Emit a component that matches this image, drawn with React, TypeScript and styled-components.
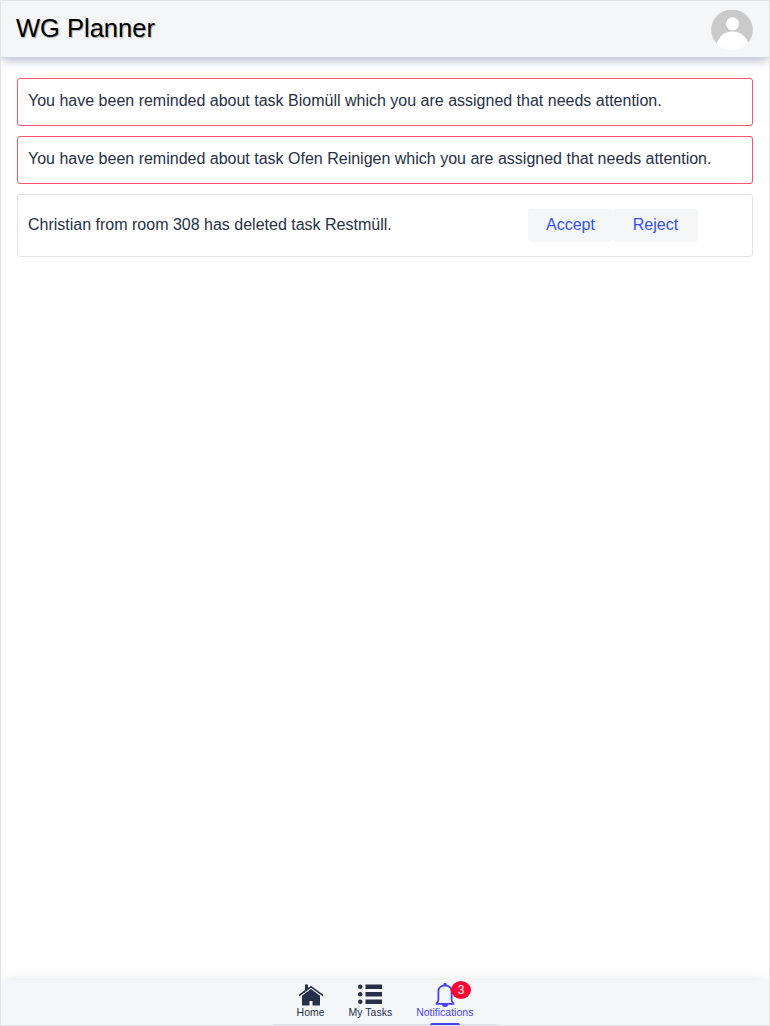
import React from "react";
import styled, { createGlobalStyle } from "styled-components";

const GlobalStyle = createGlobalStyle`
  * { box-sizing: border-box; }
  body {
    margin: 0;
    background: #fff;
    color: #263048;
    font-family: "Liberation Sans", Arial, sans-serif;
  }
`;

const Shell = styled.div`
  display: flex;
  flex-direction: column;
  height: 1026px;
  border: 1px solid #e2e3e5;
  overflow: hidden;
`;

const Header = styled.header`
  display: flex;
  align-items: center;
  justify-content: space-between;
  flex: none;
  height: 57px;
  padding: 0 16px 0 15px;
  background: #f4f6f8;
  border-bottom: 1px solid #d0d4e0;
  box-shadow: 0 3px 10px -1px rgba(60, 70, 120, 0.4);
`;

const Title = styled.h1`
  margin: 0;
  padding-bottom: 2px;
  color: #000;
  font-size: 25.5px;
  line-height: 32px;
  font-weight: 400;
  text-shadow: 1px 1px 1px rgba(0, 0, 0, 0.3);
`;

const Avatar = styled.svg`
  display: block;
  width: 42px;
  height: 40px;
  margin-top: 2px;
`;

const List = styled.main`
  display: flex;
  flex: 1;
  flex-direction: column;
  gap: 10px;
  padding: 20px 16px;
`;

const Card = styled.article<{ $urgent?: boolean }>`
  display: flex;
  align-items: center;
  justify-content: space-between;
  height: ${(p) => (p.$urgent ? 48 : 63)}px;
  padding: 0 54px 0 10px;
  border: 1px solid ${(p) => (p.$urgent ? "#f9556a" : "#e2e3e5")};
  border-radius: 3px;
  font-size: 16px;
  line-height: 26px;
`;

const Message = styled.span<{ $raised?: boolean }>`
  padding-bottom: ${(p) => (p.$raised ? 2 : 1)}px;
  white-space: nowrap;
`;

const Actions = styled.div`
  display: flex;
`;

const Button = styled.button`
  width: 85px;
  height: 33px;
  padding: 0 0 1px;
  border: 0;
  border-radius: 4px;
  background: #f3f5f7;
  color: #3450f5;
  font: 16px/32px "Liberation Sans", Arial, sans-serif;
`;

const Footer = styled.nav`
  display: flex;
  flex: none;
  justify-content: center;
  height: 45px;
  background: #f4f6f8;
  box-shadow: 0 -3px 12px -3px rgba(40, 50, 70, 0.13);
`;

const Tabs = styled.div`
  display: flex;
  justify-content: center;
  width: 225px;
  box-shadow: inset 0 -1px #dfe1e7;
`;

const Tab = styled.a<{ $active?: boolean }>`
  position: relative;
  display: flex;
  flex-direction: column;
  align-items: center;
  padding: 3px 12px 0;
  color: ${(p) => (p.$active ? "#4543ee" : "#263048")};
  font-size: 10.5px;
  line-height: 11px;
  white-space: nowrap;

  &::after {
    content: "";
    display: ${(p) => (p.$active ? "block" : "none")};
    position: absolute;
    bottom: 0;
    left: calc(50% - 15px);
    width: 30px;
    height: 2px;
    border-radius: 2px 2px 0 0;
    background: #4543ee;
  }
`;

const Icon = styled.svg`
  display: block;
  width: 24px;
  height: 24px;
`;

const Badge = styled.span`
  position: absolute;
  top: 1px;
  left: 47px;
  width: 20px;
  height: 18px;
  border-radius: 50%;
  background: #ff0530;
  color: #fff;
  font-size: 12px;
  line-height: 18px;
  text-align: center;
`;

const reminders = ["Biomüll", "Ofen Reinigen"];

export default function App() {
  return (
    <>
      <GlobalStyle />
      <Shell>
        <Header>
          <Title>WG Planner</Title>
          <Avatar viewBox="0 0 42 40">
            <path d="M5.5 33.5A20.9 20.4 0 1 1 36.5 33.5L21 36Z" fill="#cacaca" />
            <circle cx="21.5" cy="13.8" r="6.5" fill="#fff" />
            <path d="M5.5 34C8 26 14 21.5 21.3 21.5S35 26 37.3 33C33 37.5 27 40 21 40S9.5 38 5.5 34Z" fill="#fff" />
          </Avatar>
        </Header>
        <List>
          {reminders.map((task) => (
            <Card key={task} $urgent>
              <Message $raised>
                You have been reminded about task {task} which you are assigned that needs attention.
              </Message>
            </Card>
          ))}
          <Card>
            <Message>Christian from room 308 has deleted task Restmüll.</Message>
            <Actions>
              <Button>Accept</Button>
              <Button>Reject</Button>
            </Actions>
          </Card>
        </List>
        <Footer>
          <Tabs>
            <Tab>
              <Icon viewBox="0 0 16 16" fill="currentColor">
                <path d="M16 7.7 8 1.8 6 3.3V1H4V4.7L0 7.7V9L8 3.1 16 9Z" />
                <path d="M8 4 2 8.5V15H7V12H9V15H14V8.5Z" />
              </Icon>
              Home
            </Tab>
            <Tab>
              <Icon viewBox="0 0 16 16" fill="currentColor">
                <path d="M5 1H16V4H5ZM5 6H16V9H5ZM5 11H16V14H5Z" />
                <circle cx="1.5" cy="2.5" r="1.5" />
                <circle cx="1.5" cy="7.5" r="1.5" />
                <circle cx="1.5" cy="12.5" r="1.5" />
              </Icon>
              My Tasks
            </Tab>
            <Tab $active>
              <Icon viewBox="0 0 16 16" fill="currentColor">
                <path fillRule="evenodd" d="M14.2 13.2C13.5 12.7 13 12 13 11V5.5C13 3.2 11.4 1.7 9 1.2V0.7A1 1 0 0 0 7 0.7V1.2C4.6 1.7 3 3.2 3 5.5V11C3 12 2.5 12.7 1.8 13.2V14.5H6C6 15.4 6.9 16 8 16S10 15.4 10 14.5H14.2ZM3.3 13.3C3.9 12.7 4.2 12 4.2 11V6C4.2 3.6 5.6 2.4 8 2.4S11.8 3.6 11.8 6V11C11.8 12 12.1 12.7 12.7 13.3Z" />
              </Icon>
              Notifications
              <Badge>3</Badge>
            </Tab>
          </Tabs>
        </Footer>
      </Shell>
    </>
  );
}
